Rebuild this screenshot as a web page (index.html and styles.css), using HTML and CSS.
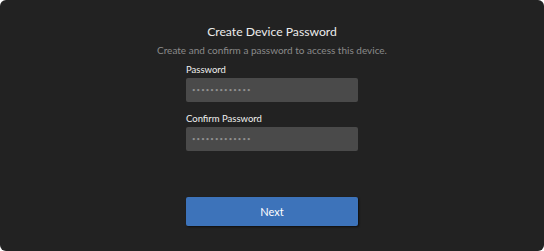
FILE: index.html
```html
<!DOCTYPE html>
<html>
<head>
<meta charset="utf-8">
<link rel="stylesheet" href="styles.css">
</head>
<body>
<div class="screen">
  <h1 class="title">Create Device Password</h1>
  <p class="subtitle">Create and confirm a password to access this device.</p>
  <div class="form">
    <label class="label">Password</label>
    <div class="input">•••••••••••••</div>
    <label class="label label-2">Confirm Password</label>
    <div class="input">•••••••••••••</div>
    <button class="btn">Next</button>
  </div>
</div>
</body>
</html>
```
FILE: styles.css
```css
html, body {
  margin: 0;
  padding: 0;
  background: #ffffff;
}
.screen {
  width: 544px;
  height: 251px;
  box-sizing: border-box;
  background: #222222;
  border-radius: 6px;
  display: flex;
  flex-direction: column;
  align-items: center;
  padding-top: 24px;
  font-family: Lato, "Open Sans", sans-serif;
}
.title {
  margin: 0;
  font-size: 12.2px;
  font-weight: 400;
  color: #ececec;
  line-height: 16px;
}
.subtitle {
  margin: 4px 0 0 0;
  font-size: 10px;
  color: #8a8a8a;
  line-height: 12px;
}
.form {
  width: 172px;
  display: flex;
  flex-direction: column;
  margin-top: 8px;
}
.label {
  font-size: 9.5px;
  color: #f0f0f0;
  line-height: 12px;
  margin-bottom: 2px;
}
.label-2 {
  margin-top: 11px;
}
.input {
  height: 24px;
  background: #4a4a4a;
  border-radius: 2px;
  color: #8f8f8f;
  font-size: 6px;
  letter-spacing: 1.1px;
  line-height: 24px;
  padding-left: 6px;
}
.btn {
  margin-top: 46px;
  height: 29px;
  border: none;
  border-radius: 2px;
  background: #3d73ba;
  color: #ffffff;
  font-family: Lato, "Open Sans", sans-serif;
  font-size: 11px;
  box-shadow: 1px 1px 2px rgba(0,0,0,0.6);
  padding: 0;
}
```
